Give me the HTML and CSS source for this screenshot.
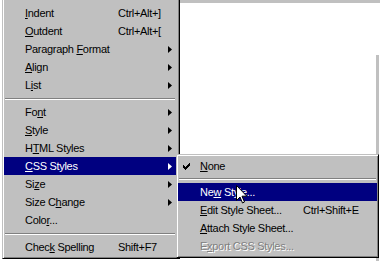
FILE: index.html
```html
<!DOCTYPE html>
<html>
<head>
<meta charset="utf-8">
<link rel="stylesheet" href="styles.css">
</head>
<body>
<div class="screen">
  <div class="doc">
    <div class="doc-edge"></div>
  </div>

  <div class="menu main-menu">
    <div class="item"><span class="label"><u>I</u>ndent</span><span class="key">Ctrl+Alt+]</span><span class="sub"></span></div>
    <div class="item"><span class="label"><u>O</u>utdent</span><span class="key">Ctrl+Alt+[</span><span class="sub"></span></div>
    <div class="item"><span class="label">Paragraph <u>F</u>ormat</span><span class="key"></span><span class="sub"><svg class="arrow" viewBox="0 0 4 7" width="4" height="7"><polygon points="0,0 4,3.5 0,7"/></svg></span></div>
    <div class="item"><span class="label"><u>A</u>lign</span><span class="key"></span><span class="sub"><svg class="arrow" viewBox="0 0 4 7" width="4" height="7"><polygon points="0,0 4,3.5 0,7"/></svg></span></div>
    <div class="item"><span class="label">L<u>i</u>st</span><span class="key"></span><span class="sub"><svg class="arrow" viewBox="0 0 4 7" width="4" height="7"><polygon points="0,0 4,3.5 0,7"/></svg></span></div>
    <div class="sep"></div>
    <div class="item"><span class="label">Fo<u>n</u>t</span><span class="key"></span><span class="sub"><svg class="arrow" viewBox="0 0 4 7" width="4" height="7"><polygon points="0,0 4,3.5 0,7"/></svg></span></div>
    <div class="item"><span class="label"><u>S</u>tyle</span><span class="key"></span><span class="sub"><svg class="arrow" viewBox="0 0 4 7" width="4" height="7"><polygon points="0,0 4,3.5 0,7"/></svg></span></div>
    <div class="item"><span class="label">H<u>T</u>ML Styles</span><span class="key"></span><span class="sub"><svg class="arrow" viewBox="0 0 4 7" width="4" height="7"><polygon points="0,0 4,3.5 0,7"/></svg></span></div>
    <div class="item active"><span class="label"><u>C</u>SS Styles</span><span class="key"></span><span class="sub"><svg class="arrow" viewBox="0 0 4 7" width="4" height="7"><polygon points="0,0 4,3.5 0,7"/></svg></span></div>
    <div class="item"><span class="label">Si<u>z</u>e</span><span class="key"></span><span class="sub"><svg class="arrow" viewBox="0 0 4 7" width="4" height="7"><polygon points="0,0 4,3.5 0,7"/></svg></span></div>
    <div class="item"><span class="label">Size C<u>h</u>ange</span><span class="key"></span><span class="sub"><svg class="arrow" viewBox="0 0 4 7" width="4" height="7"><polygon points="0,0 4,3.5 0,7"/></svg></span></div>
    <div class="item"><span class="label">Colo<u>r</u>...</span><span class="key"></span><span class="sub"></span></div>
    <div class="sep"></div>
    <div class="item"><span class="label">Chec<u>k</u> Spelling</span><span class="key">Shift+F7</span><span class="sub"></span></div>
  </div>

  <div class="menu sub-menu">
    <div class="sitem"><span class="check"><svg viewBox="0 0 7 7" width="7" height="7"><path d="M0 2h1v1h1v1h1v-1h1v-1h1v-1h1v-1h1v3h-1v1h-1v1h-1v1h-1v1h-1v-1h-1v-1h-1v-1h-1z"/></svg></span><span class="label"><u>N</u>one</span><span class="key"></span></div>
    <div class="ssep"></div>
    <div class="sitem active"><span class="check"></span><span class="label">Ne<u>w</u> Style...</span><span class="key"></span></div>
    <div class="sitem"><span class="check"></span><span class="label"><u>E</u>dit Style Sheet...</span><span class="key">Ctrl+Shift+E</span></div>
    <div class="sitem"><span class="check"></span><span class="label"><u>A</u>ttach Style Sheet...</span><span class="key"></span></div>
    <div class="sitem disabled"><span class="check"></span><span class="label">E<u>x</u>port CSS Styles...</span><span class="key"></span></div>
  </div>

  <svg class="pointer" viewBox="0 0 12 19" width="12" height="19"><path d="M0.5 0.5 L0.5 15.5 L4 12 L6.5 18 L8.5 17 L6 11.2 L10.8 11.2 Z"/></svg>
</div>
</body>
</html>
```

FILE: styles.css
```css
html, body {
  margin: 0;
  padding: 0;
  background: #ffffff;
}

.screen {
  position: relative;
  width: 380px;
  height: 261px;
  overflow: hidden;
  font-family: "Liberation Sans", Arial, sans-serif;
  font-size: 11px;
  letter-spacing: -0.3px;
  color: #000000;
}

.doc {
  height: 258px;
  margin-left: 180px;
  border-top: 3px solid #c0c0c0;
  background: #ffffff;
  display: flex;
  justify-content: flex-end;
  padding-top: 52px;
}

.doc-edge {
  width: 3px;
  margin-right: 1px;
  background: #c0c0c0;
  border-left: 1px solid #ffffff;
}

.menu {
  position: absolute;
  box-sizing: border-box;
  background: #c0c0c0;
  border: 1px solid;
  border-color: #c0c0c0 #000000 #000000 #c0c0c0;
  box-shadow: inset 1px 1px 0 #ffffff, inset -1px -1px 0 #808080;
}

.main-menu {
  left: 2px;
  top: -2px;
  width: 178px;
  padding: 5px 3px 2px 1px;
}

.item {
  display: grid;
  grid-template-columns: 93px 1fr 12px;
  align-items: center;
  height: 18px;
  padding-left: 21px;
  white-space: nowrap;
}

.item .sub {
  display: flex;
  align-items: center;
  padding-left: 4px;
}

.arrow {
  display: block;
  fill: #000000;
}

.active {
  background: #000080;
  color: #ffffff;
}

.active .arrow {
  fill: #ffffff;
}

.sep {
  height: 2px;
  padding: 4px 0 3px;
  margin: 0 1px;
  background: linear-gradient(#808080, #808080) 0 4px / 100% 1px no-repeat,
              linear-gradient(#ffffff, #ffffff) 0 5px / 100% 1px no-repeat;
}

.sub-menu {
  left: 176px;
  top: 154px;
  width: 203px;
  padding: 2px 1px 2px 1px;
}

.sitem {
  display: grid;
  grid-template-columns: 17px 103px 1fr;
  align-items: center;
  height: 18px;
  padding-left: 5px;
  white-space: nowrap;
}

.check {
  display: flex;
  align-items: center;
}

.check svg {
  display: block;
  fill: #000000;
}

.ssep {
  height: 2px;
  padding: 3px 0 3px;
  margin: 0 1px;
  background: linear-gradient(#808080, #808080) 0 3px / 100% 1px no-repeat,
              linear-gradient(#ffffff, #ffffff) 0 4px / 100% 1px no-repeat;
}

.disabled {
  color: #808080;
  text-shadow: 1px 1px 0 #ffffff;
}

u {
  text-decoration: underline;
  text-underline-offset: 1px;
}

.pointer {
  position: absolute;
  left: 236px;
  top: 185px;
  fill: #ffffff;
  stroke: #000000;
  stroke-width: 1;
}
```
